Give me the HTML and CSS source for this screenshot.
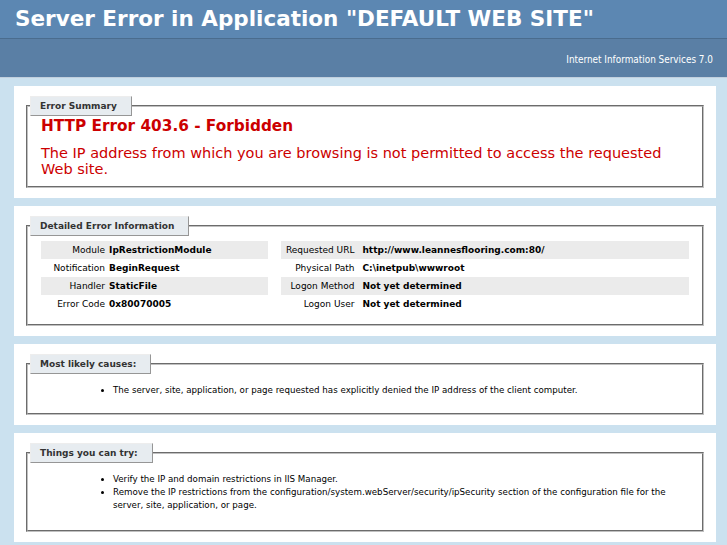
FILE: index.html
```html
<!DOCTYPE html>
<html lang="en">
<head>
    <meta charset="UTF-8">
    <meta name="viewport" content="width=device-width, initial-scale=1.0">
    <title>IIS 7.0 Detailed Error - 403.6 - Forbidden</title>
    <link rel="stylesheet" href="styles.css">
</head>
<body>
    <div id="header">
        <h1>Server Error in Application "DEFAULT WEB SITE"</h1>
    </div>
    <div id="server_version">
        <p>Internet Information Services 7.0</p>
    </div>

    <div id="content">
        <div class="content-container summary-container">
            <fieldset>
                <legend>Error Summary</legend>
                <h2>HTTP Error 403.6 - Forbidden</h2>
                <h3>The IP address from which you are browsing is not permitted to access the requested Web site.</h3>
            </fieldset>
        </div>

        <div class="content-container">
            <fieldset>
                <legend>Detailed Error Information</legend>
                <div class="details">
                    <div id="details-left">
                        <table>
                            <tr class="alt"><th>Module</th><td>IpRestrictionModule</td></tr>
                            <tr><th>Notification</th><td>BeginRequest</td></tr>
                            <tr class="alt"><th>Handler</th><td>StaticFile</td></tr>
                            <tr><th>Error Code</th><td>0x80070005</td></tr>
                        </table>
                    </div>
                    <div id="details-right">
                        <table>
                            <tr class="alt"><th>Requested URL</th><td>http://www.leannesflooring.com:80/</td></tr>
                            <tr><th>Physical Path</th><td>C:\inetpub\wwwroot</td></tr>
                            <tr class="alt"><th>Logon Method</th><td>Not yet determined</td></tr>
                            <tr><th>Logon User</th><td>Not yet determined</td></tr>
                        </table>
                    </div>
                </div>
            </fieldset>
        </div>

        <div class="content-container">
            <fieldset>
                <legend>Most likely causes:</legend>
                <ul class="causes">
                    <li>The server, site, application, or page requested has explicitly denied the IP address of the client computer.</li>
                </ul>
            </fieldset>
        </div>

        <div class="content-container">
            <fieldset>
                <legend>Things you can try:</legend>
                <ul>
                    <li>Verify the IP and domain restrictions in IIS Manager.</li>
                    <li>Remove the IP restrictions from the configuration/system.webServer/security/ipSecurity section of the configuration file for the server, site, application, or page.</li>
                </ul>
            </fieldset>
        </div>
    </div>
</body>
</html>
```

FILE: styles.css
```css
body {
    margin: 0;
    font-family: "DejaVu Sans", Verdana, sans-serif;
    font-size: 9px;
    background: #CBE1EF;
}

#header {
    padding: 6px 15px;
    height: 26px;
    background-color: #5C87B2;
}
h1 {
    margin: 0;
    font-size: 21.5px;
    line-height: 26px;
    color: #FFF;
}

#server_version {
    height: 38px;
    padding: 0 14px;
    display: flex;
    align-items: center;
    justify-content: flex-end;
    background-color: #5A7FA5;
    border-top: 1px solid #4A6C8E;
    border-bottom: 1px solid #C1CFDD;
    font-family: "DejaVu Sans Condensed", "DejaVu Sans", sans-serif;
    font-size: 9.9px;
    color: #FFF;
}
#server_version p {
    margin: 2px 0 0 0;
}

#content {
    display: flex;
    flex-direction: column;
    gap: 8px;
    padding: 8px 11px 8px 14px;
}

.content-container {
    background: #FFF;
    padding: 10px;
}

fieldset {
    margin: 0 2px;
    padding: 0 13px 10px 13px;
    border: 2px groove #c0c0c0;
}
.summary-container fieldset {
    padding-bottom: 9px;
}
legend {
    margin-left: -11px;
    padding: 3px 14px 3px 9px;
    border-top: 1px solid #EDEDED;
    border-left: 1px solid #EDEDED;
    border-right: 1px solid #969696;
    border-bottom: 1px solid #969696;
    background: #E7ECF0;
    color: #333;
    font-weight: bold;
    font-size: 9px;
    line-height: 12px;
}

h2 {
    margin: 1px 0 0 0;
    font-size: 15.3px;
    line-height: 18px;
    color: #CC0000;
}
h3 {
    margin: 10px 0 0 0;
    font-size: 14.5px;
    line-height: 16px;
    font-weight: normal;
    color: #CC0000;
}

.details {
    display: flex;
    gap: 13px;
    padding-top: 5px;
}
#details-left { width: 35%; }
#details-right { width: 63%; }

table {
    width: 100%;
    border-collapse: collapse;
    margin: 0 0 1px 0;
}
th, td {
    padding: 3px 0;
    line-height: 12px;
    vertical-align: top;
    text-align: left;
    font-weight: bold;
}
th {
    width: 30%;
    text-align: right;
    padding-right: 4px;
    font-weight: normal;
}
#details-right th {
    width: 20%;
    padding-right: 8px;
}
tr.alt th, tr.alt td {
    background-color: #ebebeb;
}

ul {
    margin: 10px 0 8px 40px;
    padding-left: 32px;
    font-size: 8.7px;
    line-height: 13px;
}
ul.causes {
    margin-bottom: 6px;
}
```
